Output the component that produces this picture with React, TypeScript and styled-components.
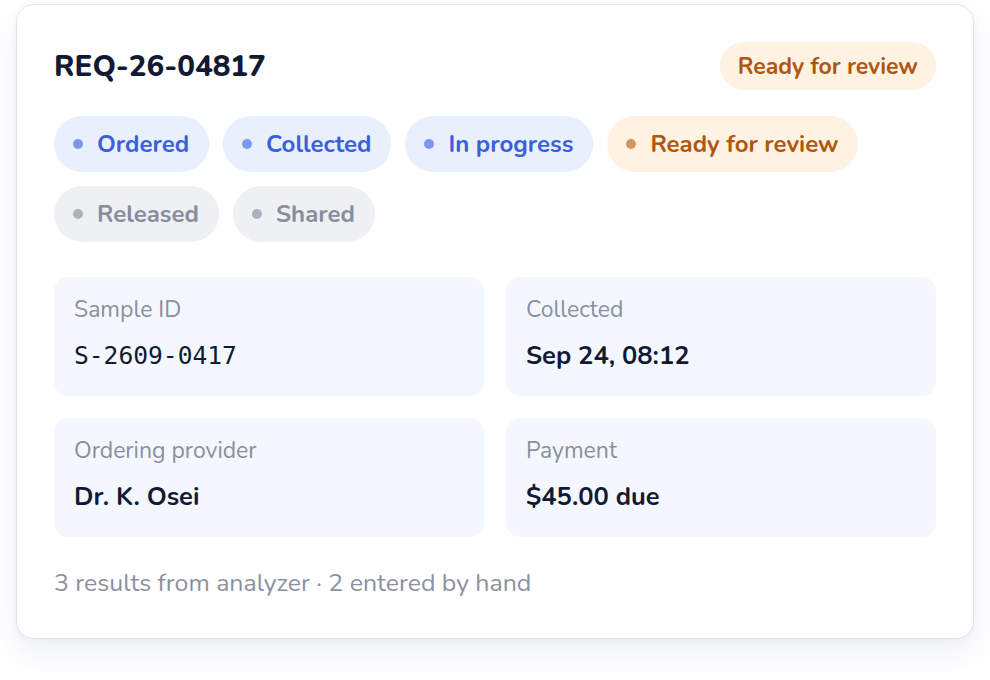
import React from "react";
import styled, { createGlobalStyle, css } from "styled-components";

const GlobalStyle = createGlobalStyle`
  html, body { margin: 0; padding: 0; background: #ffffff; }
  body { font-family: "Nunito", "Inter", "Noto Sans", sans-serif; -webkit-font-smoothing: antialiased; }
  * { box-sizing: border-box; }
`;

const Page = styled.div`
  padding: 4px 16px 40px 16px;
  width: 990px;
`;

const Card = styled.section`
  width: 958px;
  background: #ffffff;
  border: 1px solid #e2e5ee;
  border-radius: 18px;
  box-shadow: 0 14px 32px rgba(40, 60, 140, 0.08), 0 2px 6px rgba(40, 60, 130, 0.04);
  padding: 37px 37px 40px 37px;
  display: flex;
  flex-direction: column;
`;

const Header = styled.header`
  display: flex;
  align-items: center;
  justify-content: space-between;
  height: 48px;
`;

const Title = styled.h1`
  margin: 0;
  font-size: 29.5px;
  font-weight: 800;
  color: #121a33;
  line-height: 36px;
`;

type Tone = "blue" | "amber" | "grey";

const tones: Record<Tone, { bg: string; fg: string; dot: string }> = {
  blue: { bg: "#e8effd", fg: "#3a5fd8", dot: "#7d97ec" },
  amber: { bg: "#fef2e2", fg: "#b1560f", dot: "#d39461" },
  grey: { bg: "#eff0f4", fg: "#888d9b", dot: "#aeb1bb" },
};

const Badge = styled.span<{ $tone: Tone }>`
  display: inline-flex;
  align-items: center;
  height: 48px;
  padding: 0 18px;
  border-radius: 999px;
  font-size: 23px;
  font-weight: 700;
  background: ${(p) => tones[p.$tone].bg};
  color: ${(p) => tones[p.$tone].fg};
`;

const Steps = styled.div`
  display: flex;
  flex-wrap: wrap;
  gap: 14px;
  margin-top: 26px;
  width: 820px;
`;

const Pill = styled.span<{ $tone: Tone }>`
  display: inline-flex;
  align-items: center;
  gap: 14px;
  height: 56px;
  padding: 0 20px 0 19px;
  border-radius: 999px;
  font-size: 24px;
  font-weight: 700;
  ${(p) => css`
    background: ${tones[p.$tone].bg};
    color: ${tones[p.$tone].fg};
  `}
`;

const Dot = styled.span<{ $tone: Tone }>`
  width: 10px;
  height: 10px;
  border-radius: 50%;
  background: ${(p) => tones[p.$tone].dot};
  flex: none;
`;

const Grid = styled.div`
  display: grid;
  grid-template-columns: 1fr 1fr;
  gap: 22px;
  margin-top: 35px;
`;

const Field = styled.div`
  background: #f4f7fe;
  border-radius: 14px;
  height: 119px;
  padding: 18px 20px 0 20px;
  display: flex;
  flex-direction: column;
  gap: 15px;
`;

const Label = styled.div`
  font-size: 23px;
  font-weight: 400;
  color: #8a8f9e;
  line-height: 30px;
`;

const Value = styled.div<{ $mono?: boolean }>`
  font-size: 25.5px;
  font-weight: 700;
  color: #121a33;
  line-height: 32px;
  ${(p) =>
    p.$mono &&
    css`
      font-family: "DejaVu Sans Mono", "Liberation Mono", monospace;
      font-weight: 400;
      font-size: 24.6px;
    `}
`;

const Footer = styled.p`
  margin: 31px 0 0 0;
  font-size: 24.9px;
  line-height: 30px;
  color: #8c91a0;
`;

const steps: { label: string; tone: Tone }[] = [
  { label: "Ordered", tone: "blue" },
  { label: "Collected", tone: "blue" },
  { label: "In progress", tone: "blue" },
  { label: "Ready for review", tone: "amber" },
  { label: "Released", tone: "grey" },
  { label: "Shared", tone: "grey" },
];

const fields: { label: string; value: string; mono?: boolean }[] = [
  { label: "Sample ID", value: "S-2609-0417", mono: true },
  { label: "Collected", value: "Sep 24, 08:12" },
  { label: "Ordering provider", value: "Dr. K. Osei" },
  { label: "Payment", value: "$45.00 due" },
];

export default function App() {
  return (
    <>
      <GlobalStyle />
      <Page>
        <Card>
          <Header>
            <Title>REQ-26-04817</Title>
            <Badge $tone="amber">Ready for review</Badge>
          </Header>
          <Steps>
            {steps.map((s) => (
              <Pill key={s.label} $tone={s.tone}>
                <Dot $tone={s.tone} />
                {s.label}
              </Pill>
            ))}
          </Steps>
          <Grid>
            {fields.map((f) => (
              <Field key={f.label}>
                <Label>{f.label}</Label>
                <Value $mono={f.mono}>{f.value}</Value>
              </Field>
            ))}
          </Grid>
          <Footer>3 results from analyzer · 2 entered by hand</Footer>
        </Card>
      </Page>
    </>
  );
}
